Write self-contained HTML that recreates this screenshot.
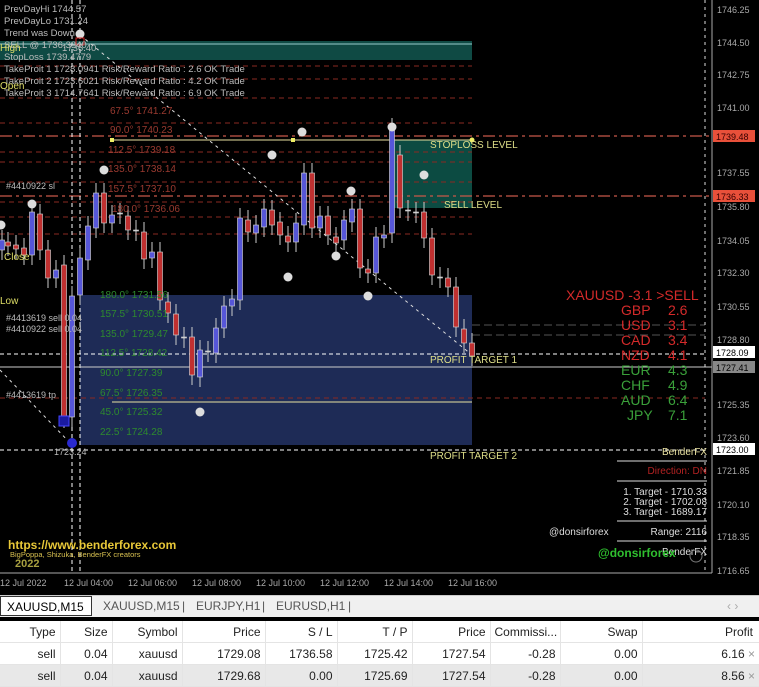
<!DOCTYPE html>
<html><head><meta charset="utf-8"><style>
body{margin:0;width:759px;height:687px;overflow:hidden;background:#000;font-family:"Liberation Sans",sans-serif}
#c{position:absolute;left:0;top:0}
.tabs{position:absolute;left:0;top:595px;width:759px;height:21px;background:#f0f0f0;border-top:1px solid #ccc;font-size:12px;color:#555}
.tabs span{position:absolute;top:3px}
table{position:absolute;left:0;top:621px;width:759px;border-collapse:collapse;font-size:12px;color:#222;background:#fff;table-layout:fixed}
td{height:21px;padding:0 4px;text-align:right;border-right:1px solid #e4e4e4;border-bottom:1px solid #e4e4e4;white-space:nowrap;overflow:hidden}
tr.g td{background:#e8e8e8}
</style></head><body>
<svg id="c" width="759" height="595" viewBox="0 0 759 595" font-family="Liberation Sans, sans-serif">
<rect width="759" height="595" fill="#000"/>
<rect x="0" y="41" width="472" height="19" fill="#0f4a44"/>
<line x1="0" y1="44" x2="472" y2="44" stroke="#9cc" stroke-width="1"/>
<rect x="392" y="140" width="80" height="68" fill="#0c4b42"/>
<rect x="80" y="295" width="392" height="150" fill="#1e2b56"/>
<g stroke="#8a2a22" stroke-dasharray="5 4" stroke-width="1">
<line x1="0" y1="66" x2="472" y2="66"/><line x1="0" y1="79" x2="472" y2="79"/>
<line x1="0" y1="98" x2="472" y2="98"/><line x1="0" y1="123" x2="472" y2="123"/>
<line x1="0" y1="152" x2="472" y2="152"/><line x1="0" y1="162" x2="472" y2="162"/>
<line x1="0" y1="182" x2="472" y2="182"/><line x1="0" y1="202" x2="472" y2="202"/>
<line x1="0" y1="217" x2="472" y2="217"/><line x1="0" y1="234" x2="472" y2="234"/>
<line x1="0" y1="398" x2="705" y2="398"/>
</g>
<g stroke="#c8584a" stroke-dasharray="12 4 3 4" stroke-width="1.3">
<line x1="0" y1="136" x2="712" y2="136"/><line x1="0" y1="196" x2="712" y2="196"/>
</g>
<g stroke="#555" stroke-dasharray="8 4"><line x1="472" y1="325" x2="705" y2="325"/><line x1="472" y1="335" x2="705" y2="335"/></g>
<line x1="110" y1="140" x2="472" y2="140" stroke="#e8e0a0"/>
<rect x="110" y="138" width="4" height="4" fill="#ee6"/><rect x="291" y="138" width="4" height="4" fill="#ee6"/><circle cx="472" cy="140" r="2.5" fill="#ee6"/>
<line x1="112" y1="402" x2="472" y2="402" stroke="#e8e0a0"/>
<g stroke="#fff" stroke-dasharray="4 3"><line x1="0" y1="354" x2="705" y2="354"/><line x1="0" y1="450" x2="705" y2="450"/>
<line x1="72" y1="0" x2="72" y2="573"/><line x1="80" y1="0" x2="80" y2="573"/></g>
<line x1="0" y1="367" x2="712" y2="367" stroke="#ccc"/>
<g stroke="#ddd" stroke-dasharray="3 4"><line x1="80" y1="35" x2="472" y2="355"/><line x1="0" y1="370" x2="72" y2="445"/><line x1="705" y1="0" x2="705" y2="573"/></g>
<g stroke-width="1"><g id="cd"></g></g>
<g fill="#ddd">
<circle cx="80" cy="34" r="4.5"/><circle cx="32" cy="204" r="4.5"/><circle cx="104" cy="170" r="4.5"/><circle cx="272" cy="155" r="4.5"/><circle cx="302" cy="132" r="4.5"/><circle cx="392" cy="127" r="4.5"/><circle cx="424" cy="175" r="4.5"/><circle cx="351" cy="191" r="4.5"/><circle cx="336" cy="256" r="4.5"/><circle cx="288" cy="277" r="4.5"/><circle cx="368" cy="296" r="4.5"/><circle cx="200" cy="412" r="4.5"/><circle cx="1" cy="225" r="4.5"/></g>
<rect x="59" y="416" width="10" height="10" fill="#1a1aa0" stroke="#44f"/><circle cx="72" cy="443" r="5" fill="#2a2ad0"/>
<rect x="76" y="38" width="8" height="7" fill="none" stroke="#c22"/>
<g font-size="9.5" fill="#bbb">
<text x="4" y="12">PrevDayHi 1744.57</text><text x="4" y="24">PrevDayLo 1731.24</text><text x="4" y="36">Trend was Down</text>
<text x="4" y="48">SELL @ 1736.3340</text><text x="4" y="60">StopLoss 1739.4779</text>
<text x="4" y="72">TakeProit 1 1728.0941 Risk/Reward Ratio : 2.6 OK Trade</text>
<text x="4" y="84">TakeProit 2 1723.6021 Risk/Reward Ratio : 4.2 OK Trade</text>
<text x="4" y="96">TakeProit 3 1714.7641 Risk/Reward Ratio : 6.9 OK Trade</text>
<text x="62" y="51">1736.40</text>
<text x="6" y="189" font-size="9">#4410922 sl</text>
<text x="6" y="321" font-size="9">#4413619 sell 0.04</text><text x="6" y="332" font-size="9">#4410922 sell 0.04</text>
<text x="6" y="398" font-size="9">#4413619 tp</text>
<text x="54" y="455" font-size="9">1723.24</text>
</g>
<g font-size="10" fill="#dede66"><text x="0" y="51">High</text><text x="0" y="89">Open</text><text x="4" y="260">Close</text><text x="0" y="304">Low</text></g>
<g font-size="10" fill="#9a3a30">
<text x="110" y="114">67.5° 1741.27</text><text x="110" y="133">90.0° 1740.23</text><text x="108" y="153">112.5° 1739.18</text>
<text x="108" y="172">135.0° 1738.14</text><text x="108" y="192">157.5° 1737.10</text><text x="112" y="212">180.0° 1736.06</text></g>
<g font-size="10" fill="#2e8a2e">
<text x="100" y="298">180.0° 1731.56</text><text x="100" y="317">157.5° 1730.51</text><text x="100" y="337">135.0° 1729.47</text>
<text x="100" y="356">112.5° 1728.42</text><text x="100" y="376">90.0° 1727.39</text><text x="100" y="396">67.5° 1726.35</text>
<text x="100" y="415">45.0° 1725.32</text><text x="100" y="435">22.5° 1724.28</text></g>
<g font-size="10" fill="#dede88"><text x="430" y="148">STOPLOSS LEVEL</text><text x="444" y="208">SELL LEVEL</text>
<text x="430" y="363">PROFIT TARGET 1</text><text x="430" y="459">PROFIT TARGET 2</text></g>
<g font-size="14" fill="#d42a2a"><text x="566" y="300">XAUUSD -3.1  &gt;SELL</text>
<text x="621" y="315">GBP</text><text x="668" y="315">2.6</text><text x="621" y="330">USD</text><text x="668" y="330">3.1</text>
<text x="621" y="345">CAD</text><text x="668" y="345">3.4</text><text x="621" y="360">NZD</text><text x="668" y="360">4.1</text></g>
<g font-size="14" fill="#3aa03a"><text x="621" y="375">EUR</text><text x="668" y="375">4.3</text><text x="621" y="390">CHF</text><text x="668" y="390">4.9</text>
<text x="621" y="405">AUD</text><text x="668" y="405">6.4</text><text x="627" y="420">JPY</text><text x="668" y="420">7.1</text></g>
<g font-size="10" fill="#ddd" text-anchor="end">
<text x="707" y="455" fill="#e8e0a0">BenderFX</text>
<text x="707" y="474" fill="#b42222">Direction: DN</text>
<text x="707" y="495">1. Target - 1710.33</text><text x="707" y="505">2. Target - 1702.08</text><text x="707" y="515">3. Target - 1689.17</text>
<text x="707" y="535">Range: 2116</text><text x="707" y="555">BenderFX</text></g>
<g stroke="#ddd"><line x1="617" y1="461" x2="707" y2="461"/><line x1="617" y1="481" x2="707" y2="481"/><line x1="617" y1="521" x2="707" y2="521"/><line x1="617" y1="541" x2="707" y2="541"/></g>
<text x="549" y="535" font-size="10" fill="#ddd">@donsirforex</text>
<text x="598" y="557" font-size="12" font-weight="bold" fill="#2fbf2f">@donsirforex</text>
<circle cx="696" cy="556" r="6" fill="none" stroke="#777"/>
<text x="8" y="549" font-size="12" font-weight="bold" fill="#e8c838">https://www.benderforex.com</text>
<text x="10" y="557" font-size="7.5" fill="#d8c050">BigPoppa, Shizuka, BenderFX creators</text>
<text x="15" y="567" font-size="11" font-weight="bold" fill="#a8a040">2022</text>
<line x1="712" y1="0" x2="712" y2="573" stroke="#aaa"/><line x1="0" y1="573" x2="712" y2="573" stroke="#aaa"/>
<g font-size="9" fill="#aaa">
<text x="717" y="13">1746.25</text><text x="717" y="46">1744.50</text><text x="717" y="78">1742.75</text><text x="717" y="111">1741.00</text>
<text x="717" y="176">1737.55</text><text x="717" y="210">1735.80</text><text x="717" y="244">1734.05</text><text x="717" y="276">1732.30</text>
<text x="717" y="310">1730.55</text><text x="717" y="343">1728.80</text><text x="717" y="408">1725.35</text><text x="717" y="441">1723.60</text>
<text x="717" y="474">1721.85</text><text x="717" y="508">1720.10</text><text x="717" y="540">1718.35</text><text x="717" y="574">1716.65</text>
<text x="0" y="586">12 Jul 2022</text><text x="64" y="586">12 Jul 04:00</text><text x="128" y="586">12 Jul 06:00</text><text x="192" y="586">12 Jul 08:00</text>
<text x="256" y="586">12 Jul 10:00</text><text x="320" y="586">12 Jul 12:00</text><text x="384" y="586">12 Jul 14:00</text><text x="448" y="586">12 Jul 16:00</text></g>
<g font-size="9"><rect x="713" y="130" width="42" height="12" fill="#e8503a"/><text x="716" y="140" fill="#300">1739.48</text>
<rect x="713" y="190" width="42" height="12" fill="#e8503a"/><text x="716" y="200" fill="#300">1736.33</text>
<rect x="713" y="346" width="42" height="12" fill="#fff"/><text x="716" y="356" fill="#000">1728.09</text>
<rect x="713" y="361" width="42" height="12" fill="#888"/><text x="716" y="371" fill="#000">1727.41</text>
<rect x="713" y="443" width="42" height="12" fill="#fff"/><text x="716" y="453" fill="#000">1723.00</text></g>
</svg>
<div class="tabs"><span style="left:0;top:0;height:20px;width:92px;background:#fff;border:1px solid #333;color:#000;padding-left:6px;line-height:20px;box-sizing:border-box">XAUUSD,M15</span>
<span style="left:103px">XAUUSD,M15</span><span style="left:182px">|</span><span style="left:196px">EURJPY,H1</span><span style="left:262px">|</span><span style="left:276px">EURUSD,H1</span><span style="left:348px">|</span><span style="left:727px;color:#aaa">‹ ›</span></div>
<table>
<colgroup><col style="width:60px"><col style="width:52px"><col style="width:70px"><col style="width:83px"><col style="width:72px"><col style="width:75px"><col style="width:78px"><col style="width:70px"><col style="width:82px"><col style="width:117px"></colgroup>
<tr><td>Type</td><td>Size</td><td>Symbol</td><td>Price</td><td>S / L</td><td>T / P</td><td>Price</td><td style="text-align:left">Commissi...</td><td>Swap</td><td style="border-right:0;padding-right:6px">Profit</td></tr>
<tr><td>sell</td><td>0.04</td><td>xauusd</td><td>1729.08</td><td>1736.58</td><td>1725.42</td><td>1727.54</td><td>-0.28</td><td>0.00</td><td style="border-right:0">6.16 <span style="color:#999">×</span></td></tr>
<tr class="g"><td>sell</td><td>0.04</td><td>xauusd</td><td>1729.68</td><td>0.00</td><td>1725.69</td><td>1727.54</td><td>-0.28</td><td>0.00</td><td style="border-right:0">8.56 <span style="color:#999">×</span></td></tr>
</table>
<script>
var d=[[2,'b',240,250],[8,'r',242,246],[16,'r',245,249],[24,'r',248,255],[32,'b',212,255],[40,'r',214,250],[48,'r',250,278],[56,'b',270,278],[64,'r',265,418],[72,'b',296,417],[80,'b',258,295],[88,'b',226,260],[96,'b',193,228],[104,'r',193,223],[112,'b',215,223],[120,'d',213,214],[128,'r',216,230],[136,'d',230,231],[144,'r',232,259],[152,'b',252,258],[160,'r',252,300],[168,'r',302,313],[176,'r',314,335],[184,'d',337,338],[192,'r',337,375],[200,'b',350,377],[208,'d',351,352],[216,'b',328,353],[224,'b',306,328],[232,'b',299,306],[240,'b',218,300],[248,'r',220,232],[256,'b',225,233],[264,'b',209,227],[272,'r',210,225],[280,'r',222,235],[288,'r',236,242],[296,'b',223,242],[304,'b',173,225],[312,'r',173,228],[320,'b',216,228],[328,'r',216,235],[336,'r',237,243],[344,'b',220,240],[352,'b',209,222],[360,'r',209,268],[368,'r',269,273],[376,'b',237,273],[384,'b',235,238],[392,'b',128,233],[400,'r',155,208],[408,'d',210,211],[416,'d',212,213],[424,'r',212,238],[432,'r',238,275],[440,'d',277,278],[448,'r',278,287],[456,'r',287,327],[464,'r',329,343],[472,'r',343,356]];
var s='';d.forEach(function(c){var x=c[0],t=c[2],b=c[3];var f=c[1]=='b'?'#5656d8':c[1]=='r'?'#c03030':'#bbb';
s+='<line x1="'+x+'" y1="'+(t-10)+'" x2="'+x+'" y2="'+(b+10)+'" stroke="#ccc"/>';
s+='<rect x="'+(x-2.5)+'" y="'+t+'" width="5" height="'+Math.max(1,b-t)+'" fill="'+f+'" stroke="#ddd" stroke-width="0.6"/>';});
document.getElementById('cd').innerHTML=s;
</script>
</body></html>
